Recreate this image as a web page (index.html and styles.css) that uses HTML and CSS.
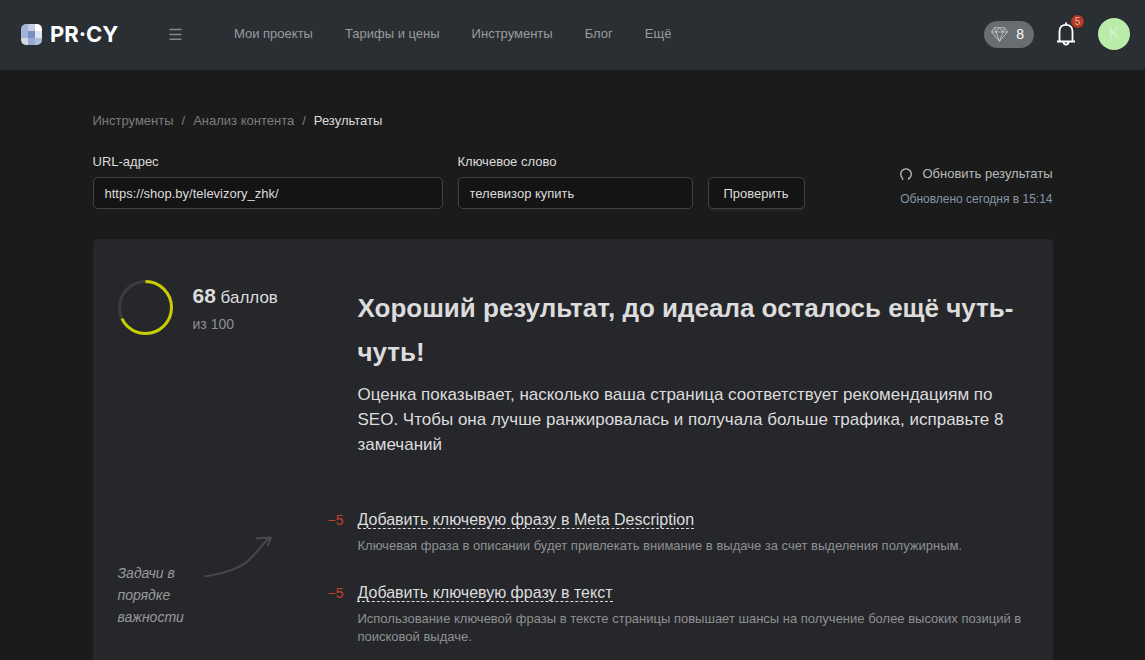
FILE: index.html
```html
<!DOCTYPE html>
<html lang="ru">
<head>
<meta charset="utf-8">
<meta name="viewport" content="width=device-width, initial-scale=1">
<title>Анализ контента — PR-CY</title>
<link rel="stylesheet" href="styles.css">
</head>
<body>
<header class="header">
  <a class="logo" href="#">
    <svg class="logo-mark" viewBox="0 0 21 21" aria-hidden="true">
      <defs><clipPath id="mark"><rect width="21" height="21" rx="5"/></clipPath></defs>
      <g clip-path="url(#mark)">
        <path fill="#a3b2d8" d="M0 0h7v14H0z"/>
        <path fill="#c5cfe8" d="M7 0h7v7H7z"/>
        <path fill="#fff" d="M14 0h7v7h-7z"/>
        <path fill="#7890c6" d="M7 7h7v7H7z"/>
        <path fill="#dfe4f2" d="M14 7h7v7h-7z"/>
        <path fill="#d3dae4" d="M0 14h7v7H0z"/>
        <path fill="#98a9d6" d="M7 14h7v7H7z"/>
        <path fill="#b0bee0" d="M14 14h7v7h-7z"/>
      </g>
    </svg>
    <span>PR·CY</span>
  </a>
  <button class="menu-button" type="button" aria-label="Меню">
    <svg class="menu-icon" viewBox="0 0 13 12" aria-hidden="true"><path d="M.5 1.500h12M.5 6.500h12M.5 11.300h12" stroke="currentColor" stroke-width="1.400"/></svg>
  </button>
  <nav class="nav">
    <a href="#">Мои проекты</a>
    <a href="#">Тарифы и цены</a>
    <a href="#">Инструменты</a>
    <a href="#">Блог</a>
    <a href="#">Ещё</a>
  </nav>
  <div class="account">
    <a class="balance" href="#">
      <svg class="gem" viewBox="0 0 17 15" aria-hidden="true"><path d="M3.500 .7h10l3 4.300-8 9.300L.5 5zM.5 5h16M3.500 .7L5 5l3.500 9.300L12 5l1.500-4.300M5 5l3.500-4.300L12 5" fill="none" stroke="currentColor" stroke-width=".9" stroke-linejoin="round"/></svg>
      <span>8</span>
    </a>
    <button class="bell" type="button" aria-label="Уведомления">
      <svg class="bell-icon" viewBox="0 0 20 24" aria-hidden="true"><path d="M1 19.500h18M3.500 19.500V9.500C3.500 5 6 2.800 10 2.800s6.500 2.200 6.500 6.700V19.500M10 3V.5M7.500 20c.2 3.400 4.800 3.400 5 0" fill="none" stroke="currentColor" stroke-width="1.800"/></svg>
      <span class="badge">5</span>
    </button>
    <a class="avatar" href="#">K</a>
  </div>
</header>

<main class="page">
  <nav class="crumbs" aria-label="Навигация">
    <a href="#">Инструменты</a><span>/</span><a href="#">Анализ контента</a><span>/</span><strong>Результаты</strong>
  </nav>

  <form class="form">
    <div class="field field-url">
      <label for="url">URL-адрес</label>
      <input id="url" type="text" value="https://shop.by/televizory_zhk/">
    </div>
    <div class="field field-key">
      <label for="key">Ключевое слово</label>
      <input id="key" type="text" value="телевизор купить">
    </div>
    <button class="submit" type="submit">Проверить</button>
    <div class="refresh">
      <button class="refresh-button" type="button">
        <svg class="refresh-icon" viewBox="0 0 12 12" aria-hidden="true"><path d="M3 10.600A5.300 5.300 0 1 1 9 10.600" fill="none" stroke="currentColor" stroke-width="1.300"/><path d="M3.600 11.300H1.800M8.600 11.800V9.500" stroke="currentColor" stroke-width="1.100"/></svg>
        <span>Обновить результаты</span>
      </button>
      <p class="updated">Обновлено сегодня в 15:14</p>
    </div>
  </form>

  <section class="panel">
    <div class="score">
      <svg class="ring" viewBox="0 0 55 55" aria-hidden="true">
        <circle cx="27.500" cy="27.500" r="26" fill="none" stroke="#3a3c40" stroke-width="3"/>
        <circle cx="27.500" cy="27.500" r="26" fill="none" stroke="#c9cc00" stroke-width="3" pathLength="100" stroke-dasharray="68 32" transform="rotate(-90 27.500 27.500)"/>
      </svg>
      <div>
        <p class="points"><b>68</b> баллов</p>
        <p class="total">из 100</p>
      </div>
    </div>
    <div class="summary">
      <h1>Хороший результат, до идеала осталось ещё чуть-чуть!</h1>
      <p>Оценка показывает, насколько ваша страница соответствует рекомендациям по SEO. Чтобы она лучше ранжировалась и получала больше трафика, исправьте 8 замечаний</p>
    </div>
    <aside class="hint">
      <p>Задачи в порядке важности</p>
      <svg class="arrow" viewBox="0 0 70 42" aria-hidden="true"><path d="M.5 40.500C19 37.500 35 33 44 25 52 18 57 9 65.500 2M52 2.500L67 1.500 63.500 10" fill="none" stroke="#48494d" stroke-width="2" stroke-linejoin="round"/></svg>
    </aside>
    <ul class="tasks">
      <li class="task">
        <span class="penalty">−5</span>
        <div>
          <a class="task-link" href="#">Добавить ключевую фразу в Meta Description</a>
          <p>Ключевая фраза в описании будет привлекать внимание в выдаче за счет выделения полужирным.</p>
        </div>
      </li>
      <li class="task">
        <span class="penalty">−5</span>
        <div>
          <a class="task-link" href="#">Добавить ключевую фразу в текст</a>
          <p>Использование ключевой фразы в тексте страницы повышает шансы на получение более высоких позиций в поисковой выдаче.</p>
        </div>
      </li>
    </ul>
  </section>
</main>
</body>
</html>
```
FILE: styles.css
```css
* { box-sizing: border-box; }
body {
  margin: 0;
  background: #1b1b1b;
  color: #dcdcdc;
  font: 13px/18px "Liberation Sans", Arial, sans-serif;
}
a { color: inherit; text-decoration: none; }
p, h1, ul { margin: 0; padding: 0; }
button, input { font: inherit; color: inherit; }
button { cursor: pointer; }

.header {
  display: flex;
  align-items: center;
  min-height: 70px;
  padding: 0 15px 2px 21px;
  background: #2a2f33;
}
.logo {
  display: flex;
  align-items: center;
  gap: 8px;
  width: 148px;
  color: #fff;
  font: 700 22px/20px Inter, sans-serif;
}
.logo-mark { width: 21px; height: 21px; }
.menu-button, .bell, .refresh-button {
  padding: 0;
  border: 0;
  background: none;
}
.menu-button { display: flex; color: #84878a; }
.menu-icon { width: 13px; height: 12px; }
.nav {
  display: flex;
  gap: 32px;
  margin-left: 52px;
  color: #999b9d;
}
.account {
  display: flex;
  align-items: center;
  margin-left: auto;
}
.balance {
  display: flex;
  align-items: center;
  gap: 8px;
  height: 27px;
  padding: 0 10px 0 7px;
  border-radius: 14px;
  background: #696c71;
  color: #fff;
  font-size: 14px;
}
.gem { width: 17px; height: 15px; color: #c4c6c8; }
.bell {
  position: relative;
  display: flex;
  margin-left: 22px;
  color: #fff;
}
.bell-icon { width: 20px; height: 24px; }
.badge {
  position: absolute;
  top: -8px;
  right: -9px;
  width: 15px;
  height: 15px;
  border: 1px solid #1f2225;
  border-radius: 50%;
  background: #b33b25;
  color: #dcb5ac;
  font-size: 10px;
  line-height: 13px;
  text-align: center;
}
.avatar {
  width: 32px;
  height: 32px;
  margin-left: 22px;
  border-radius: 50%;
  background: #b9eba9;
  color: #d6f0cd;
  font-size: 16px;
  line-height: 32px;
  text-align: center;
}

.page { max-width: 960px; margin: 0 auto; padding-top: 42px; }
.crumbs { display: flex; gap: 8px; color: #7d7d7d; }
.crumbs strong { color: #dcdcdc; font-weight: 400; }

.form {
  display: flex;
  align-items: flex-end;
  gap: 15px;
  margin-top: 23px;
}
.field { display: flex; flex-direction: column; gap: 6px; }
.field-url { flex: 0 1 350px; }
.field-key { flex: 0 1 235px; }
.field input {
  width: 100%;
  height: 32px;
  padding: 0 11px;
  border: 1px solid #434343;
  border-radius: 5px;
  background: #141414;
}
.submit {
  height: 32px;
  padding: 2px 15px 0;
  border: 1px solid #434343;
  border-radius: 5px;
  background: #141414;
  box-shadow: 0 2px 0 #262626;
}
.refresh { margin-left: auto; padding-bottom: 1px; }
.refresh-button {
  display: flex;
  align-items: center;
  justify-content: space-between;
  width: 100%;
  color: #b8bbbd;
}
.refresh-icon { width: 12px; height: 12px; }
.updated { margin-top: 7px; color: #8696a8; font-size: 12px; }

.panel {
  display: grid;
  grid-template-columns: 210px 1fr;
  margin-top: 30px;
  padding: 41px 25px;
  border-radius: 5px;
  background: #26272b;
}
.score { display: flex; gap: 20px; }
.ring { width: 55px; height: 55px; }
.points { font-size: 17px; line-height: 32px; }
.points b { font-size: 21px; }
.total { color: #8f9092; font-size: 14px; line-height: 20px; }
.summary { padding: 6px 0 0 30px; }
.summary h1 { font-size: 26px; line-height: 44px; }
.summary p { margin-top: 8px; font-size: 17px; line-height: 25px; }
.hint {
  display: flex;
  gap: 14px;
  padding-top: 105px;
  color: #98999b;
  font-size: 14px;
  font-style: italic;
  line-height: 22px;
}
.hint p { width: 72px; }
.arrow { width: 70px; height: 42px; margin-top: -26px; }
.tasks { padding-top: 51px; list-style: none; }
.task { display: flex; gap: 14px; margin-bottom: 26px; }
.penalty {
  width: 16px;
  color: #c4412b;
  font-size: 14px;
  line-height: 25px;
  white-space: nowrap;
}
.task-link {
  border-bottom: 1px dashed #dcdcdc;
  font-size: 16px;
  line-height: 24px;
}
.task p { margin-top: 5px; color: #8f9092; }
```
